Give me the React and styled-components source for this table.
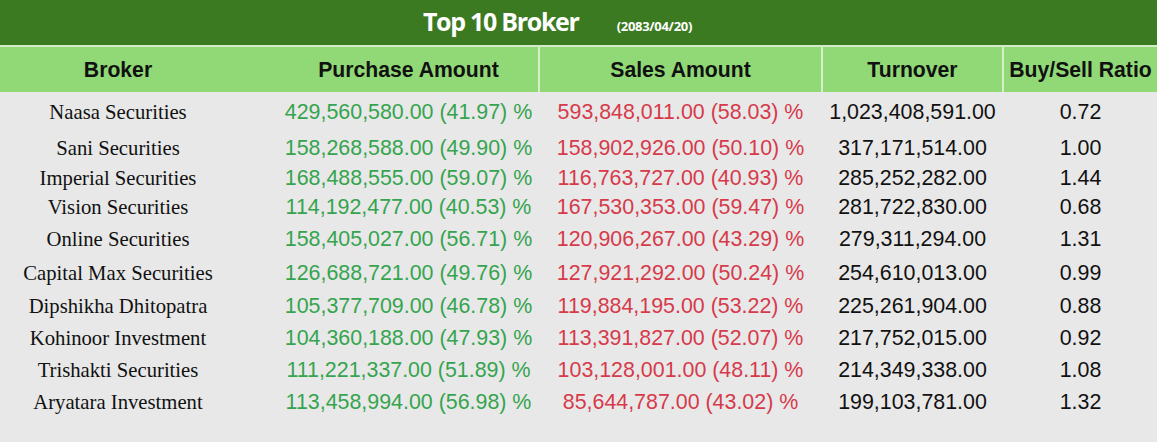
import React from "react";
import styled, { createGlobalStyle } from "styled-components";

const Global = createGlobalStyle`
  html, body { margin: 0; padding: 0; background: #e8e8e8; }
  body { width: 1157px; height: 442px; overflow: hidden; }
`;

const Page = styled.div`
  width: 1157px;
  height: 442px;
  background: #e8e8e8;
  display: flex;
  flex-direction: column;
`;

const TitleBar = styled.div`
  box-sizing: border-box;
  height: 47px;
  padding-top: 6px;
  padding-right: 42px;
  background: #3c7a22;
  border-bottom: 2px solid #d3ebc8;
  display: flex;
  align-items: baseline;
  justify-content: center;
  gap: 38px;
  color: #ffffff;
  font-family: "Open Sans", "Noto Sans", sans-serif;
  font-weight: 700;
`;

const Title = styled.span`
  font-size: 25px;
  letter-spacing: -1.3px;
  line-height: 30px;
`;

const DateTag = styled.span`
  font-size: 13px;
  letter-spacing: -0.3px;
`;

const Grid = styled.div`
  display: grid;
  grid-template-columns: 236px 302px 283px 181px 155px;
`;

const HeaderRow = styled(Grid)`
  height: 45px;
  background: #90d976;
`;

const HeadCell = styled.div`
  display: flex;
  align-items: center;
  justify-content: center;
  font-family: "Liberation Sans", Arial, sans-serif;
  font-weight: 700;
  font-size: 21.2px;
  color: #111;
  padding-left: ${(p) => p.$shift || 0}px;
  border-left: ${(p) => (p.$sep ? "2px solid #d6eecb" : "none")};
`;

const Body = styled.div`
  display: flex;
  flex-direction: column;
`;

const Row = styled(Grid)`
  box-sizing: border-box;
  height: ${(p) => p.$h}px;
  padding-top: 2px;
`;

const Cell = styled.div`
  display: flex;
  align-items: center;
  justify-content: center;
  white-space: nowrap;
  font-family: ${(p) =>
    p.$serif
      ? '"Liberation Serif", "Times New Roman", serif'
      : '"Liberation Sans", Arial, sans-serif'};
  font-size: ${(p) => (p.$serif ? "20.7px" : "21.4px")};
  color: ${(p) =>
    p.$tone === "buy" ? "#35a44e" : p.$tone === "sell" ? "#d63a4b" : "#111"};
  padding-left: ${(p) => p.$shift || 0}px;
  border-left: ${(p) => (p.$sep ? "2px solid transparent" : "none")};
`;

const rows = [
  ["Naasa Securities", "429,560,580.00 (41.97) %", "593,848,011.00 (58.03) %", "1,023,408,591.00", "0.72", 39],
  ["Sani Securities", "158,268,588.00 (49.90) %", "158,902,926.00 (50.10) %", "317,171,514.00", "1.00", 32],
  ["Imperial Securities", "168,488,555.00 (59.07) %", "116,763,727.00 (40.93) %", "285,252,282.00", "1.44", 29],
  ["Vision Securities", "114,192,477.00 (40.53) %", "167,530,353.00 (59.47) %", "281,722,830.00", "0.68", 29],
  ["Online Securities", "158,405,027.00 (56.71) %", "120,906,267.00 (43.29) %", "279,311,294.00", "1.31", 34],
  ["Capital Max Securities", "126,688,721.00 (49.76) %", "127,921,292.00 (50.24) %", "254,610,013.00", "0.99", 34],
  ["Dipshikha Dhitopatra", "105,377,709.00 (46.78) %", "119,884,195.00 (53.22) %", "225,261,904.00", "0.88", 32],
  ["Kohinoor Investment", "104,360,188.00 (47.93) %", "113,391,827.00 (52.07) %", "217,752,015.00", "0.92", 32],
  ["Trishakti Securities", "111,221,337.00 (51.89) %", "103,128,001.00 (48.11) %", "214,349,338.00", "1.08", 32],
  ["Aryatara Investment", "113,458,994.00 (56.98) %", "85,644,787.00 (43.02) %", "199,103,781.00", "1.32", 33],
];

export default function App() {
  return (
    <>
      <Global />
      <Page>
        <TitleBar>
          <Title>Top 10 Broker</Title>
          <DateTag>(2083/04/20)</DateTag>
        </TitleBar>
        <HeaderRow>
          <HeadCell>Broker</HeadCell>
          <HeadCell $shift={43}>Purchase Amount</HeadCell>
          <HeadCell $sep>Sales Amount</HeadCell>
          <HeadCell $sep>Turnover</HeadCell>
          <HeadCell $sep>Buy/Sell Ratio</HeadCell>
        </HeaderRow>
        <Body>
          {rows.map(([name, buy, sell, turn, ratio, h]) => (
            <Row key={name} $h={h}>
              <Cell $serif>{name}</Cell>
              <Cell $tone="buy" $shift={43}>{buy}</Cell>
              <Cell $tone="sell" $sep>{sell}</Cell>
              <Cell $sep>{turn}</Cell>
              <Cell $sep>{ratio}</Cell>
            </Row>
          ))}
        </Body>
      </Page>
    </>
  );
}
